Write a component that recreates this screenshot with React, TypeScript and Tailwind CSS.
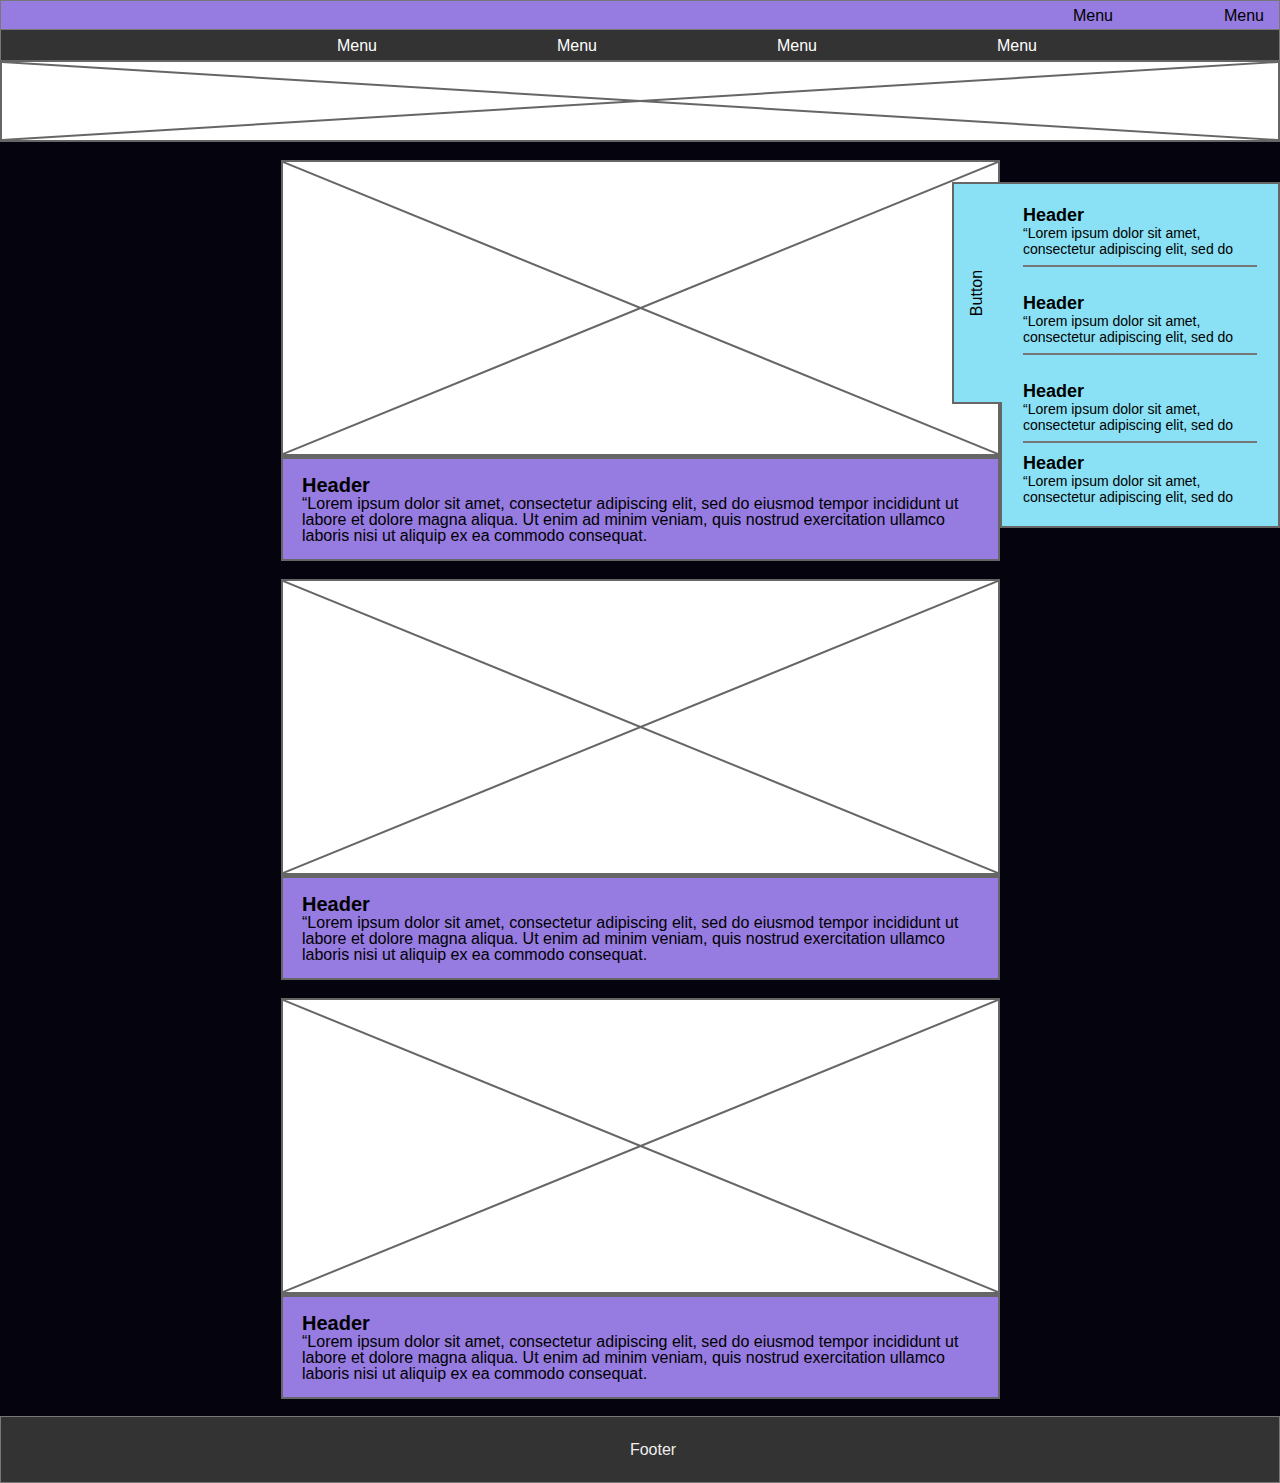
import React from "react";

const lorem =
  "\u201cLorem ipsum dolor sit amet, consectetur adipiscing elit, sed do eiusmod tempor incididunt ut labore et dolore magna aliqua. Ut enim ad minim veniam, quis nostrud exercitation ullamco laboris nisi ut aliquip ex ea commodo consequat.";

// placeholder image box with an X drawn across it
const Cross = () => (
  <svg className="absolute inset-0 h-full w-full" viewBox="0 0 100 100" preserveAspectRatio="none">
    <line x1="0" y1="0" x2="100" y2="100" stroke="#666" strokeWidth="2" vectorEffect="non-scaling-stroke" />
    <line x1="100" y1="0" x2="0" y2="100" stroke="#666" strokeWidth="2" vectorEffect="non-scaling-stroke" />
  </svg>
);

const Card = () => (
  <div className="flex w-[719px] flex-col">
    <div className="relative h-[296px] border-2 border-[#666] bg-white">
      <Cross />
    </div>
    <div className="h-[105px] border-2 border-t-[3px] border-[#666] bg-[#967be0] px-[19px] pt-[15px] text-black">
      <div className="text-[20px] font-bold leading-[22px]">Header</div>
      <p className="text-[16px] leading-[16px]">{lorem}</p>
    </div>
  </div>
);

const SideItem = ({ top, divider }: { top: string; divider: boolean }) => (
  <div className={top}>
    <div className="text-[18px] font-bold leading-[18px]">Header</div>
    <p className="mt-[1px] text-[14px] leading-[16px]">
      &ldquo;Lorem ipsum dolor sit amet,
      <br />
      consectetur adipiscing elit, sed do
    </p>
    {divider && <div className="mt-[8px] h-[2px] w-[234px] bg-[#777]" />}
  </div>
);

export default function App() {
  return (
    <div className="relative flex min-h-[1483px] w-[1280px] flex-col bg-[#05040e] font-['Liberation_Sans',Arial,sans-serif]">
      {/* top bar */}
      <div className="flex h-[30px] items-center justify-end gap-[111px] border border-[#777] bg-[#967be0] pt-[2px] pr-[15px] text-[16px] text-black">
        <span>Menu</span>
        <span>Menu</span>
      </div>
      {/* nav */}
      <div className="flex h-[30px] items-center border-x border-[#777] bg-[#333] pt-[1px] pl-[246px] text-[16px] text-white">
        <span className="w-[220px] text-center">Menu</span>
        <span className="w-[220px] text-center">Menu</span>
        <span className="w-[220px] text-center">Menu</span>
        <span className="w-[220px] text-center">Menu</span>
      </div>
      {/* banner */}
      <div className="relative h-[82px] border-2 border-[#666] bg-white">
        <Cross />
      </div>

      <div className="flex flex-1 flex-col items-start gap-[18px] pl-[281px] pt-[18px] pb-[17px]">
        <Card />
        <Card />
        <Card />
      </div>

      <div className="flex h-[67px] items-center justify-center border border-[#777] bg-[#333] pl-[26px] text-[16px] text-[#eee]">
        <span>Footer</span>
      </div>

      {/* flyout panel */}
      <div className="absolute left-[1000px] top-[182px] h-[346px] w-[280px] border-2 border-[#666] bg-[#8ae0f4] pl-[21px] text-black">
        <SideItem top="pt-[22px]" divider />
        <SideItem top="pt-[27px]" divider />
        <SideItem top="pt-[27px]" divider />
        <SideItem top="pt-[11px]" divider={false} />
      </div>
      <div className="absolute left-[952px] top-[182px] flex h-[222px] w-[50px] items-center justify-center border-y-2 border-l-2 border-[#666] bg-[#8ae0f4] pr-[2px]">
        <span className="-rotate-90 text-[16px] text-black">Button</span>
      </div>
    </div>
  );
}
